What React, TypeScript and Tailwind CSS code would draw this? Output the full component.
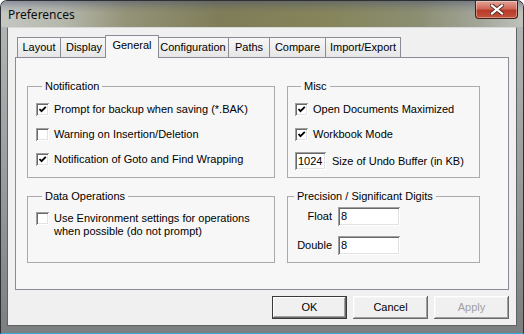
import React from "react";

const sunken =
  "shadow-[inset_1px_1px_0_#a0a0a0,inset_-1px_-1px_0_#ffffff,inset_2px_2px_0_#696969,inset_-2px_-2px_0_#e3e3e3]";

function Check({ checked }: { checked: boolean }) {
  return (
    <div className="w-[13px] h-[13px] shrink-0 bg-white shadow-[inset_1px_1px_0_#a0a0a0,inset_-1px_-1px_0_#ffffff,inset_2px_2px_0_#696969,inset_-2px_-2px_0_#e3e3e3] flex items-center justify-center">
      {checked && (
        <svg width="9" height="9" viewBox="0 0 9 9">
          <path d="M1.5 4 L3.5 6.2 L7.8 1.8" fill="none" stroke="#000" strokeWidth="1.8" />
        </svg>
      )}
    </div>
  );
}

function Row({ checked, children }: { checked: boolean; children: React.ReactNode }) {
  return (
    <div className="flex items-center h-[13px] gap-[5px]">
      <Check checked={checked} />
      <span className="leading-[13px] whitespace-nowrap">{children}</span>
    </div>
  );
}

function Tab({ label, w, last }: { label: string; w: string; last?: boolean }) {
  return (
    <div
      className={`${w} h-[20px] border-t border-l ${last ? "border-r" : ""} border-[#898c95] bg-[linear-gradient(180deg,#f7f7f7,#e6e6e6)] flex items-center justify-center text-[11px] leading-[13px] text-black whitespace-nowrap`}
    >
      {label}
    </div>
  );
}

function Button({ label, disabled, def }: { label: string; disabled?: boolean; def?: boolean }) {
  return (
    <div
      className={`w-[75px] h-[23px] flex items-center justify-center text-[11px] ${disabled ? "text-[#a0a0a0]" : "text-black"} bg-[#f0f0f0] ${
        def
          ? "border border-[#3a3a3a] shadow-[inset_-1px_-1px_0_#696969,inset_1px_1px_0_#ffffff,inset_-2px_-2px_0_#a0a0a0]"
          : "shadow-[inset_-1px_-1px_0_#696969,inset_1px_1px_0_#ffffff,inset_-2px_-2px_0_#a0a0a0,inset_2px_2px_0_#f5f5f5]"
      }`}
    >
      {label}
    </div>
  );
}

export default function App() {
  return (
    <div className="w-[524px] h-[334px] flex flex-col border border-[#2e3133] border-b-[#3aa6dc] rounded-t-[7px] overflow-hidden bg-[linear-gradient(180deg,#b4b8b7_0%,#9a9e9e_50%,#7b7f80_100%)] font-['Liberation_Sans',Arial,sans-serif] text-[11px] text-black">
      {/* Title bar */}
      <div className="h-[26px] shrink-0 flex items-start justify-between bg-[linear-gradient(180deg,rgba(70,78,110,0.45)_0%,rgba(70,78,110,0.15)_25%,rgba(0,0,0,0)_45%),linear-gradient(90deg,#c4c7c3_0%,#b5b7ab_12%,#949378_24%,#7f7d58_42%,#85845a_62%,#8c8e72_80%,#a3a69a_92%,#bfc2bc_100%)]">
        <span className="pl-[7px] pt-[6px] text-[12px] leading-[15px] text-[#0c0c0c] font-['Noto_Sans',Arial,sans-serif]">
          Preferences
        </span>
        <div className="mr-[5px] w-[43px] h-[18px] rounded-b-[4px] border border-t-0 border-[#4a1a14] bg-[linear-gradient(180deg,#e3a597_0%,#d0695a_45%,#b93a28_55%,#c2543e_100%)] flex items-center justify-center shadow-[inset_0_0_0_1px_rgba(255,255,255,0.35)]">
          <svg width="14" height="11" viewBox="0 0 14 11">
            <path d="M2 1.5 L12 9.5 M12 1.5 L2 9.5" stroke="#5b2a22" strokeWidth="4" strokeLinecap="square" />
            <path d="M2 1.5 L12 9.5 M12 1.5 L2 9.5" stroke="#ffffff" strokeWidth="2.2" strokeLinecap="square" />
          </svg>
        </div>
      </div>

      {/* Client area */}
      <div className="mx-[6px] border border-[#5f6364] border-t-[#d8dada] bg-[#f0f0f0] flex flex-col pl-[7px] pt-[7px]">
        {/* Tabs */}
        <div className="h-[22px] flex items-end pl-[2px]">
          <Tab label="Layout" w="w-[43px]" />
          <Tab label="Display" w="w-[47px]" />
          <div className="relative z-10 -ml-[2px] -mr-[2px] w-[54px] h-[23px] -mb-px border border-b-0 border-[#898c95] bg-[#f7f7f7] flex items-start justify-center pt-[3px] text-[11px] leading-[13px] rounded-t-[1px]">
            General
          </div>
          <Tab label="Configuration" w="w-[71px]" />
          <Tab label="Paths" w="w-[41px]" />
          <Tab label="Compare" w="w-[56px]" />
          <Tab label="Import/Export" w="w-[76px]" last />
        </div>

        {/* Tab panel */}
        <div className="w-[494px] h-[233px] border border-[#898c95] bg-[#f7f7f7] pl-[11px] pt-[22px]">
          <div className="grid grid-cols-[248px_193px] gap-x-[12px] gap-y-[12px]">
            <fieldset className="h-[98px] border border-[#aaaaaa] pl-[8px] pt-[10px]">
              <legend className="ml-[6px] px-[3px] leading-[13px]">Notification</legend>
              <div className="flex flex-col gap-[12px]">
                <Row checked>Prompt for backup when saving (*.BAK)</Row>
                <Row checked={false}>Warning on Insertion/Deletion</Row>
                <Row checked>Notification of Goto and Find Wrapping</Row>
              </div>
            </fieldset>

            <fieldset className="h-[98px] border border-[#aaaaaa] pl-[7px] pt-[10px]">
              <legend className="ml-[6px] px-[3px] leading-[13px]">Misc</legend>
              <div className="flex flex-col gap-[12px]">
                <Row checked>Open Documents Maximized</Row>
                <Row checked>Workbook Mode</Row>
                <div className="flex items-center gap-[6px] -mt-[1px]">
                  <div className={`w-[31px] h-[18px] bg-white ${sunken} pl-[3px] flex items-center leading-[13px]`}>1024</div>
                  <span className="whitespace-nowrap">Size of Undo Buffer (in KB)</span>
                </div>
              </div>
            </fieldset>

            <fieldset className="h-[73px] border border-[#aaaaaa] pl-[8px] pt-[9px]">
              <legend className="ml-[6px] px-[3px] leading-[13px]">Data Operations</legend>
              <div className="flex items-start gap-[5px]">
                <Check checked={false} />
                <span className="leading-[13px]">
                  Use Environment settings for operations
                  <br />
                  when possible (do not prompt)
                </span>
              </div>
            </fieldset>

            <fieldset className="h-[73px] border border-[#aaaaaa] pt-[4px]">
              <legend className="ml-[6px] px-[3px] leading-[13px]">Precision / Significant Digits</legend>
              <div className="flex flex-col gap-[10px]">
                <div className="flex items-center gap-[6px]">
                  <span className="w-[44px] text-right">Float</span>
                  <div className={`w-[62px] h-[19px] bg-white ${sunken} pl-[3px] flex items-center`}>8</div>
                </div>
                <div className="flex items-center gap-[6px]">
                  <span className="w-[44px] text-right">Double</span>
                  <div className={`w-[62px] h-[19px] bg-white ${sunken} pl-[3px] flex items-center`}>8</div>
                </div>
              </div>
            </fieldset>
          </div>
        </div>

        {/* Buttons */}
        <div className="w-[494px] flex justify-end gap-[6px] mt-[6px] mb-[6px]">
          <Button label="OK" def />
          <Button label="Cancel" />
          <Button label="Apply" disabled />
        </div>
      </div>
    </div>
  );
}
